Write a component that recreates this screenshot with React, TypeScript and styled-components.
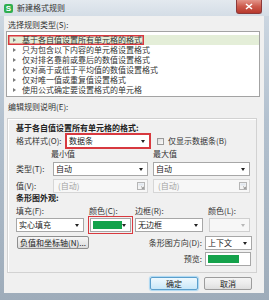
import styled, { createGlobalStyle } from "styled-components";

const GlobalStyle = createGlobalStyle`
  html, body {
    margin: 0;
    padding: 0;
  }
  body {
    width: 269px;
    height: 300px;
    overflow: hidden;
    font-family: "Noto Sans CJK SC", "Noto Sans", sans-serif;
    font-size: 8px;
    color: #2e2e2e;
    background: #a9b7c5;
  }
`;

const rules = [
  "基于各自值设置所有单元格的格式",
  "只为包含以下内容的单元格设置格式",
  "仅对排名靠前或靠后的数值设置格式",
  "仅对高于或低于平均值的数值设置格式",
  "仅对唯一值或重复值设置格式",
  "使用公式确定要设置格式的单元格",
];

export default function App() {
  return (
    <>
      <GlobalStyle />
      <Window>
        <TitleBar>
          <AppIcon>S</AppIcon>
          <Title>新建格式规则</Title>
          <CloseButton>
            <svg width="8" height="7" viewBox="0 0 8 7">
              <path d="M1 1 L7 6 M7 1 L1 6" stroke="#fff" strokeWidth="1.6" />
            </svg>
          </CloseButton>
        </TitleBar>

        <Client>
          <SectionLabel>选择规则类型(S):</SectionLabel>
          <RuleList>
            {rules.map((rule, i) => (
              <RuleRow key={rule} $selected={i === 0}>
                <RuleBody $marked={i === 0}>
                  <Arrow />
                  {rule}
                </RuleBody>
              </RuleRow>
            ))}
          </RuleList>

          <SectionLabel $top={5}>编辑规则说明(E):</SectionLabel>
          <Group>
            <Heading>基于各自值设置所有单元格的格式:</Heading>

            <Row $top={1}>
              <Label $width={50}>格式样式(O):</Label>
              <Select $width={84} $highlight>
                数据条
                <Caret />
              </Select>
              <CheckBox />
              <Label>仅显示数据条(B)</Label>
            </Row>

            <Row $top={1} $height={10}>
              <Label $width={137} $indent={35}>
                最小值
              </Label>
              <Label>最大值</Label>
            </Row>

            <Row $top={3}>
              <Label $width={37}>类型(T):</Label>
              <Select $width={95}>
                自动
                <Caret />
              </Select>
              <Gap $w={5} />
              <Select $width={97}>
                自动
                <Caret />
              </Select>
            </Row>

            <Row $top={3}>
              <Label $width={37}>值(V):</Label>
              <ValueBox $width={95}>
                (自动)
                <RangeIcon />
              </ValueBox>
              <Gap $w={5} />
              <ValueBox $width={97}>
                (自动)
                <RangeIcon />
              </ValueBox>
            </Row>

            <Heading $top={0}>条形图外观:</Heading>

            <Row $top={3} $height={10}>
              <Label $width={73}>填充(F):</Label>
              <Label $width={46}>颜色(C):</Label>
              <Label $width={73}>边框(R):</Label>
              <Label>颜色(L):</Label>
            </Row>

            <Row $top={2}>
              <Select $width={68}>
                实心填充
                <Caret />
              </Select>
              <Gap $w={6} />
              <Select $width={41} $marked>
                <Swatch $width={29} />
                <Caret />
              </Select>
              <Gap $w={4} />
              <Select $width={68}>
                无边框
                <Caret />
              </Select>
              <Gap $w={6} />
              <Select $width={41} $disabled>
                <Caret $disabled />
              </Select>
            </Row>

            <BottomArea>
              <PushButton $width={72}>负值和坐标轴(N)...</PushButton>
              <RightColumn>
                <Row $top={0}>
                  <Label $align="right" $width={110}>
                    条形图方向(D):
                  </Label>
                  <Gap $w={3} />
                  <Select $width={47}>
                    上下文
                    <Caret />
                  </Select>
                </Row>
                <Row $top={2}>
                  <Label $align="right" $width={110}>
                    预览:
                  </Label>
                  <Gap $w={3} />
                  <Preview>
                    <Swatch $width={31} />
                  </Preview>
                </Row>
              </RightColumn>
            </BottomArea>
          </Group>

          <ButtonBar>
            <DialogButton $primary>确定</DialogButton>
            <DialogButton>取消</DialogButton>
          </ButtonBar>
        </Client>
      </Window>
    </>
  );
}

function RangeIcon() {
  return (
    <IconSlot>
      <svg width="8" height="8" viewBox="0 0 8 8">
        <rect x="0.5" y="0.5" width="7" height="7" fill="#f4f4f4" stroke="#b5b5b5" />
        <rect x="1.5" y="1.5" width="5" height="2" fill="#dfe6ee" />
        <path d="M4 4.5 L6.5 6.5 M6.5 4.8 L6.5 6.5 L4.8 6.5" stroke="#8a8a8a" strokeWidth="0.8" fill="none" />
      </svg>
    </IconSlot>
  );
}

const Window = styled.div`
  width: 269px;
  height: 300px;
  display: flex;
  flex-direction: column;
  background: linear-gradient(#cfd9e3, #b3c1cf 40%, #9eacba);
  box-sizing: border-box;
`;

const TitleBar = styled.div`
  height: 16px;
  display: flex;
  align-items: center;
  padding-left: 4px;
  gap: 4px;
  background: linear-gradient(#e3e9ef, #d4dde6);
`;

const AppIcon = styled.span`
  width: 9px;
  height: 9px;
  border-radius: 2px;
  background: #2fae4f;
  color: #fff;
  font-family: "Liberation Sans", sans-serif;
  font-weight: bold;
  font-size: 8px;
  line-height: 9px;
  text-align: center;
`;

const Title = styled.span`
  color: #333;
  font-size: 8px;
  line-height: 10px;
`;

const CloseButton = styled.div`
  margin-left: auto;
  margin-right: 7px;
  align-self: flex-start;
  width: 26px;
  height: 14px;
  border-radius: 0 0 3px 3px;
  border: 1px solid #8c3a3a;
  border-top: none;
  box-sizing: border-box;
  background: linear-gradient(#e3958a, #cc5a4c 50%, #b8392d);
  display: flex;
  align-items: center;
  justify-content: center;
`;

const Client = styled.div`
  flex: 1;
  margin: 0 5px 7px 4px;
  padding: 0 4px 0 2px;
  background: #f0f0f0;
  display: flex;
  flex-direction: column;
`;

const SectionLabel = styled.div<{ $top?: number }>`
  margin: ${({ $top }) => $top ?? 4}px 0 0 2px;
  line-height: 10px;
  height: 10px;
  color: #333;
`;

const RuleList = styled.div`
  margin-top: 1px;
  height: 66px;
  box-sizing: border-box;
  border: 1px solid #a3a3a3;
  background: #fff;
  padding: 3px 0 0 0;
  display: flex;
  flex-direction: column;
`;

const RuleRow = styled.div<{ $selected?: boolean }>`
  height: 10px;
  padding-left: 1px;
  display: flex;
  background: ${({ $selected }) => ($selected ? "#e4eed8" : "transparent")};
`;

const RuleBody = styled.span<{ $marked?: boolean }>`
  display: inline-flex;
  align-items: center;
  gap: 6px;
  padding: 0 2px 0 5px;
  line-height: 10px;
  white-space: nowrap;
  color: #333;
  box-shadow: ${({ $marked }) => ($marked ? "inset 0 0 0 1.5px #d8393f" : "none")};
`;

const Arrow = styled.span`
  width: 0;
  height: 0;
  border-top: 2.5px solid transparent;
  border-bottom: 2.5px solid transparent;
  border-left: 3px solid #7b7b7b;
`;

const Group = styled.div`
  margin: 6px 0 0 1px;
  width: 250px;
  box-sizing: border-box;
  border: 1px solid #d2d2d2;
  box-shadow: inset 1px 1px 0 #fff;
  padding: 0 0 6px 8px;
  display: flex;
  flex-direction: column;
`;

const Heading = styled.div<{ $top?: number }>`
  margin-top: ${({ $top }) => $top ?? 4}px;
  height: 10px;
  line-height: 10px;
  font-weight: bold;
  color: #222;
`;

const Row = styled.div<{ $top: number; $height?: number }>`
  margin-top: ${({ $top }) => $top}px;
  height: ${({ $height }) => $height ?? 14}px;
  display: flex;
  align-items: center;
`;

const Label = styled.span<{ $width?: number; $indent?: number; $align?: string }>`
  ${({ $width }) => ($width ? `width: ${$width}px;` : "")}
  flex-shrink: 0;
  box-sizing: border-box;
  padding-left: ${({ $indent }) => $indent ?? 0}px;
  text-align: ${({ $align }) => $align ?? "left"};
  line-height: 10px;
  white-space: nowrap;
  color: #333;
`;

const Gap = styled.span<{ $w: number }>`
  width: ${({ $w }) => $w}px;
  flex-shrink: 0;
`;

const Select = styled.div<{
  $width: number;
  $highlight?: boolean;
  $marked?: boolean;
  $disabled?: boolean;
}>`
  width: ${({ $width }) => $width}px;
  height: 14px;
  flex-shrink: 0;
  box-sizing: border-box;
  display: flex;
  align-items: center;
  padding: 0 4px 0 2px;
  line-height: 10px;
  color: #222;
  background: ${({ $disabled }) => ($disabled ? "#f7f7f7" : "#fff")};
  border: 1px solid
    ${({ $highlight, $disabled }) =>
      $highlight ? "#d8393f" : $disabled ? "#cfcfcf" : "#a7a7a7"};
  ${({ $highlight }) => ($highlight ? "box-shadow: 0 0 0 1px #d8393f;" : "")}
  ${({ $marked }) => ($marked ? "outline: 1.5px solid #d8393f; outline-offset: 1px;" : "")}
`;

const Caret = styled.span<{ $disabled?: boolean }>`
  margin-left: auto;
  width: 0;
  height: 0;
  border-left: 2.5px solid transparent;
  border-right: 2.5px solid transparent;
  border-top: 3px solid ${({ $disabled }) => ($disabled ? "#b8b8b8" : "#222")};
`;

const Swatch = styled.span<{ $width: number }>`
  width: ${({ $width }) => $width}px;
  height: 8px;
  background: #14a24b;
`;

const CheckBox = styled.span`
  margin: 0 4px 0 7px;
  width: 7px;
  height: 7px;
  box-sizing: border-box;
  border: 1px solid #9a9a9a;
  background: linear-gradient(135deg, #dcdcdc, #fbfbfb);
`;

const ValueBox = styled.div<{ $width: number }>`
  width: ${({ $width }) => $width}px;
  height: 14px;
  flex-shrink: 0;
  box-sizing: border-box;
  display: flex;
  align-items: center;
  padding: 0 2px 0 4px;
  border: 1px solid #d6d6d6;
  background: #f7f7f7;
  color: #a2a2a2;
  line-height: 10px;
`;

const IconSlot = styled.span`
  margin-left: auto;
  display: flex;
`;

const BottomArea = styled.div`
  margin-top: 4px;
  display: flex;
  align-items: flex-start;
`;

const PushButton = styled.div<{ $width: number }>`
  margin-left: 1px;
  width: ${({ $width }) => $width}px;
  height: 13px;
  box-sizing: border-box;
  border: 1px solid #8e8e8e;
  border-radius: 2px;
  background: linear-gradient(#f6f6f6, #e9e9e9 50%, #dcdcdc);
  display: flex;
  align-items: center;
  justify-content: center;
  line-height: 10px;
  color: #222;
  white-space: nowrap;
`;

const RightColumn = styled.div`
  margin-left: auto;
  margin-right: 4px;
  display: flex;
  flex-direction: column;
`;

const Preview = styled.div`
  width: 46px;
  height: 14px;
  box-sizing: border-box;
  border: 1px solid #a7a7a7;
  background: #fff;
  display: flex;
  align-items: center;
  padding-left: 2px;
`;

const ButtonBar = styled.div`
  margin-top: 4px;
  display: flex;
  justify-content: flex-end;
  gap: 6px;
  padding-right: 8px;
`;

const DialogButton = styled.div<{ $primary?: boolean }>`
  width: 48px;
  height: 13px;
  box-sizing: border-box;
  border-radius: 2px;
  display: flex;
  align-items: center;
  justify-content: center;
  line-height: 10px;
  color: #222;
  border: 1px solid ${({ $primary }) => ($primary ? "#5b9fcc" : "#9c9c9c")};
  background: ${({ $primary }) =>
    $primary
      ? "linear-gradient(#eef8fe, #dcf0fb 50%, #c8e7f8)"
      : "linear-gradient(#f5f5f5, #ececec 50%, #dedede)"};
  box-shadow: ${({ $primary }) => ($primary ? "0 0 1px 1px #a9d6f2" : "none")};
`;
